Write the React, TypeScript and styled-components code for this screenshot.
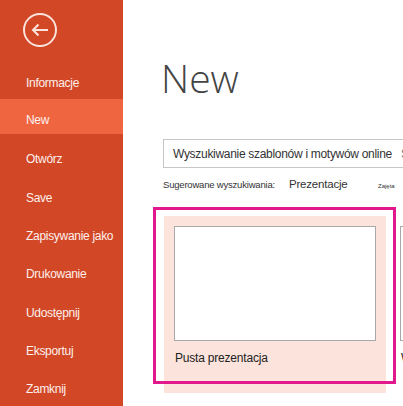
import React from "react";
import styled, { createGlobalStyle } from "styled-components";

const GlobalStyle = createGlobalStyle`
  html, body {
    margin: 0;
    padding: 0;
    background: #ffffff;
    overflow: hidden;
  }
  body {
    font-family: "Liberation Sans", Arial, sans-serif;
  }
`;

const Page = styled.div`
  display: flex;
  width: 403px;
  height: 406px;
  overflow: hidden;
`;

const Sidebar = styled.nav`
  flex: 0 0 123px;
  display: flex;
  flex-direction: column;
  background: #d24726;
`;

const BackButton = styled.button`
  display: flex;
  align-items: center;
  justify-content: center;
  width: 34px;
  height: 34px;
  margin: 13px 0 14px 23px;
  padding: 0;
  border: 2px solid #fbe3dc;
  border-radius: 50%;
  background: transparent;
  box-sizing: border-box;
`;

const MenuItem = styled.div<{ $active?: boolean }>`
  display: flex;
  align-items: center;
  height: ${(p) => (p.$active ? "35px" : "38.5px")};
  margin-bottom: ${(p) => (p.$active ? "3.5px" : "0")};
  padding: ${(p) => (p.$active ? "6px" : "5px")} 0 0 26px;
  box-sizing: border-box;
  background: ${(p) => (p.$active ? "#ef6540" : "transparent")};
  color: #fdf0ec;
  font-size: 12px;
  letter-spacing: -0.3px;
`;

const Main = styled.main`
  flex: 1;
  min-width: 0;
  padding-left: 40px;
  color: #444444;
`;

const Title = styled.h1`
  margin: 55px 0 0 -2px;
  font-family: "Open Sans", "Liberation Sans", sans-serif;
  font-weight: 300;
  font-size: 39px;
  line-height: 46px;
  color: #444444;
`;

const SearchBox = styled.div`
  display: flex;
  align-items: center;
  gap: 9px;
  width: 300px;
  height: 29px;
  margin-top: 38px;
  padding-left: 9px;
  box-sizing: border-box;
  border: 1px solid #c6c6c6;
  font-size: 12px;
  letter-spacing: -0.3px;
  white-space: nowrap;
  color: #333333;
`;

const SearchHint = styled.span`
  color: #777777;
`;

const Suggested = styled.div`
  display: flex;
  align-items: baseline;
  height: 24px;
  margin-top: 10px;
  white-space: nowrap;
`;

const SuggestLabel = styled.span`
  font-size: 9.5px;
  letter-spacing: -0.2px;
  color: #333333;
  width: 126px;
`;

const SuggestLink = styled.span`
  font-size: 11.5px;
  letter-spacing: -0.2px;
  color: #333333;
  width: 89px;
`;

const SuggestTiny = styled.span`
  font-size: 6px;
  color: #333333;
`;

const CardRow = styled.div`
  display: flex;
  gap: 4px;
  margin-top: 14px;
  margin-left: 1px;
`;

const Card = styled.div<{ $selected?: boolean }>`
  position: relative;
  flex: 0 0 222px;
  height: 177px;
  padding: 10px;
  box-sizing: border-box;
  background: ${(p) => (p.$selected ? "#fce4dc" : "transparent")};
`;

const Thumb = styled.div`
  height: 115px;
  border: 1px solid #a8a8a8;
  background: #ffffff;
  box-sizing: border-box;
`;

const CardLabel = styled.div`
  margin-top: 10px;
  padding-left: 1px;
  font-size: 12px;
  letter-spacing: -0.2px;
  color: #222222;
`;

const Highlight = styled.div`
  position: absolute;
  left: -11px;
  top: -9px;
  width: 243px;
  height: 177px;
  border: 3px solid #e2198c;
  box-sizing: border-box;
  pointer-events: none;
`;

const menu = [
  "Informacje",
  "New",
  "Otwórz",
  "Save",
  "Zapisywanie jako",
  "Drukowanie",
  "Udostępnij",
  "Eksportuj",
  "Zamknij",
];

export default function App() {
  return (
    <>
      <GlobalStyle />
      <Page>
        <Sidebar>
          <BackButton aria-label="Wstecz">
            <svg width="18" height="14" viewBox="0 0 18 14" fill="none">
              <path
                d="M17 7H2M7.5 1.5L2 7l5.5 5.5"
                stroke="#fbe3dc"
                strokeWidth="2"
              />
            </svg>
          </BackButton>
          {menu.map((m) => (
            <MenuItem key={m} $active={m === "New"}>
              {m}
            </MenuItem>
          ))}
        </Sidebar>
        <Main>
          <Title>New</Title>
          <SearchBox>
            Wyszukiwanie szablonów i motywów online
            <SearchHint>Szukaj</SearchHint>
          </SearchBox>
          <Suggested>
            <SuggestLabel>Sugerowane wyszukiwania:</SuggestLabel>
            <SuggestLink>Prezentacje</SuggestLink>
            <SuggestTiny>Zajęta</SuggestTiny>
          </Suggested>
          <CardRow>
            <Card $selected>
              <Thumb />
              <CardLabel>Pusta prezentacja</CardLabel>
              <Highlight />
            </Card>
            <Card>
              <Thumb />
              <CardLabel>Witamy</CardLabel>
            </Card>
          </CardRow>
        </Main>
      </Page>
    </>
  );
}
